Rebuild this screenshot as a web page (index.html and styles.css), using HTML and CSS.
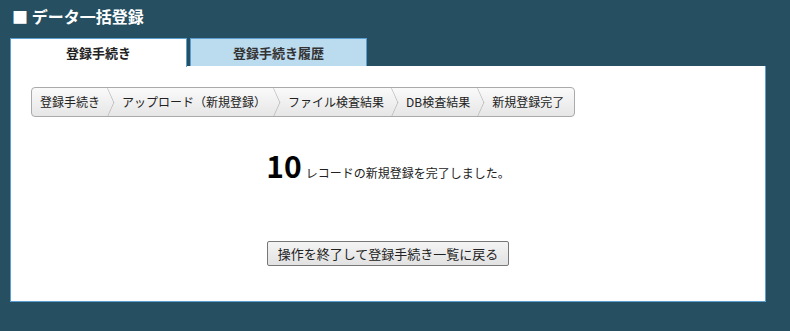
FILE: index.html
```html
<!DOCTYPE html>
<html lang="ja">
<head>
    <meta charset="UTF-8">
    <title>データ一括登録</title>
    <link rel="stylesheet" href="styles.css">
</head>
<body>
    <h1 class="page-title">■ データ一括登録</h1>

    <div class="tabs">
        <div class="tab active">登録手続き</div>
        <div class="tab">登録手続き履歴</div>
    </div>

    <div class="panel">
        <ul class="steps">
            <li>登録手続き</li>
            <li>アップロード（新規登録）</li>
            <li>ファイル検査結果</li>
            <li>DB検査結果</li>
            <li class="last">新規登録完了</li>
        </ul>

        <p class="result"><span class="count">10</span>レコードの新規登録を完了しました。</p>

        <div class="actions">
            <button class="btn">操作を終了して登録手続き一覧に戻る</button>
        </div>
    </div>
</body>
</html>
```

FILE: styles.css
```css
body {
    margin: 0;
    padding: 4px 24px 20px 10px;
    background-color: #264f62;
    font-family: "Noto Sans CJK JP", "DejaVu Sans", sans-serif;
    color: #222;
}

.page-title {
    margin: 0 0 10px 2px;
    font-size: 16px;
    font-weight: bold;
    color: #fff;
    line-height: 24px;
}

.tabs {
    display: flex;
    gap: 3px;
    height: 28px;
}

.tab {
    width: 175px;
    height: 27px;
    line-height: 27px;
    text-align: center;
    font-size: 13px;
    font-weight: bold;
    color: #333;
    background-color: #bbdbee;
    border: 1px solid #5a9fd0;
    border-bottom: none;
}

.tab.active {
    background-color: #fff;
    color: #222;
    height: 28px;
}

.panel {
    box-sizing: border-box;
    background-color: #fff;
    border: 1px solid #5a9fd0;
    border-top: none;
    height: 236px;
    padding: 21px 20px 0 20px;
}

.steps {
    display: inline-flex;
    list-style: none;
    margin: 0;
    padding: 0;
    height: 28px;
    border: 1px solid #aaa;
    border-radius: 4px;
    background: linear-gradient(#fafafa, #e6e6e6);
    overflow: hidden;
}

.steps li {
    position: relative;
    font-size: 12px;
    line-height: 28px;
    padding: 0 6px 0 9px;
    margin-right: 7px;
}

.steps li:first-child {
    padding-left: 8px;
}

.steps li::after {
    content: "";
    position: absolute;
    right: -12px;
    top: 4px;
    width: 20px;
    height: 20px;
    border-top: 1px solid #b0b0b0;
    border-right: 1px solid #b0b0b0;
    transform: scaleX(0.45) rotate(45deg);
}

.steps li.last {
    margin-right: 0;
    padding-right: 10px;
}

.steps li.last::after {
    display: none;
}

.result {
    margin: 28px 0 0 0;
    text-align: center;
    font-size: 12px;
    line-height: 40px;
}

.count {
    font-size: 30px;
    font-weight: bold;
    color: #000;
    margin-right: 4px;
}

.actions {
    margin-top: 47px;
    text-align: center;
}

.btn {
    font-family: "Noto Sans CJK JP", "DejaVu Sans", sans-serif;
    font-size: 13px;
    height: 25px;
    padding: 0 10px;
    color: #222;
    background: linear-gradient(#f4f4f4, #e2e2e2);
    border: 1px solid #777;
    border-radius: 2px;
}
```
